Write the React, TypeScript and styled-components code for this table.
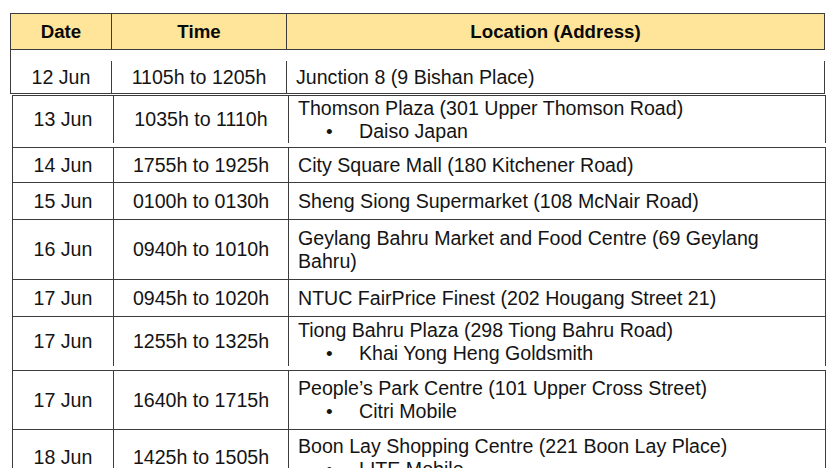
import React, { FC } from "react";
import styled, { createGlobalStyle } from "styled-components";

interface Visit {
    date: string;
    time: string;
    place: string;
    shops?: string[];
    height: number;
    lift?: number;
}

const firstVisit: Visit = { date: "12 Jun", time: "1105h to 1205h", place: "Junction 8 (9 Bishan Place)", height: 44 };

const visits: Visit[] = [
    { date: "13 Jun", time: "1035h to 1110h", place: "Thomson Plaza (301 Upper Thomson Road)", shops: ["Daiso Japan"], height: 52, lift: 4 },
    { date: "14 Jun", time: "1755h to 1925h", place: "City Square Mall (180 Kitchener Road)", height: 35 },
    { date: "15 Jun", time: "0100h to 0130h", place: "Sheng Siong Supermarket (108 McNair Road)", height: 37 },
    { date: "16 Jun", time: "0940h to 1010h", place: "Geylang Bahru Market and Food Centre (69 Geylang Bahru)", height: 60 },
    { date: "17 Jun", time: "0945h to 1020h", place: "NTUC FairPrice Finest (202 Hougang Street 21)", height: 37 },
    { date: "17 Jun", time: "1255h to 1325h", place: "Tiong Bahru Plaza (298 Tiong Bahru Road)", shops: ["Khai Yong Heng Goldsmith"], height: 54, lift: 4 },
    { date: "17 Jun", time: "1640h to 1715h", place: "People\u2019s Park Centre (101 Upper Cross Street)", shops: ["Citri Mobile"], height: 59 },
    { date: "18 Jun", time: "1425h to 1505h", place: "Boon Lay Shopping Centre (221 Boon Lay Place)", shops: ["LITE Mobile"], height: 58, lift: 2 },
];

const VisitRow: FC<{ visit: Visit; padTop?: number }> = ({ visit, padTop }) => (
    <Row $height={visit.height} $padTop={padTop || 0} $padBottom={visit.lift || 0}>
        <Cell $center>{visit.date}</Cell>
        <Cell $center>{visit.time}</Cell>
        <Cell>
            <div>{visit.place}</div>
            {visit.shops && visit.shops.map((s) => (
                <Shop key={s}>
                    <Bullet>{"\u2022"}</Bullet>
                    {s}
                </Shop>
            ))}
        </Cell>
    </Row>
);

const App: FC = () => {
    return (
        <Page>
            <GlobalStyle />
            <Table $width={815}>
                <HeadRow>
                    <HeadCell>Date</HeadCell>
                    <HeadCell>Time</HeadCell>
                    <HeadCell>Location (Address)</HeadCell>
                </HeadRow>
                <VisitRow visit={firstVisit} padTop={11} />
            </Table>
            <Table $width={814} $shift={2}>
                {visits.map((v, i) => (
                    <VisitRow key={i} visit={v} />
                ))}
            </Table>
        </Page>
    );
};

export default App;

const GlobalStyle = createGlobalStyle`
    html, body {
        margin: 0;
        padding: 0;
        background: #ffffff;
        overflow: hidden;
    }
    * {
        box-sizing: border-box;
    }
`;

const Page = styled.div`
    width: 830px;
    height: 468px;
    overflow: hidden;
    padding: 13px 0 0 10px;
    font-family: "Liberation Sans", Arial, sans-serif;
    font-size: 19.6px;
    line-height: 23px;
    color: #141414;
    display: flex;
    flex-direction: column;
    gap: 1px;
`;

const Table = styled.div<{ $width: number; $shift?: number }>`
    width: ${(p) => p.$width}px;
    margin-left: ${(p) => p.$shift || 0}px;
    border-top: 1px solid #3c3c3c;
    border-left: 1px solid #3c3c3c;
    display: flex;
    flex-direction: column;
    flex-shrink: 0;
`;

const HeadRow = styled.div`
    display: grid;
    grid-template-columns: 101px 175px 1fr;
    height: 36px;
    background: #ffe599;
    border-bottom: 1px solid #3c3c3c;
`;

const HeadCell = styled.div`
    display: flex;
    align-items: center;
    justify-content: center;
    font-size: 18.7px;
    font-weight: 700;
    color: #0a0a0a;
    border-right: 1px solid #3c3c3c;
`;

const Row = styled.div<{ $height: number; $padTop: number; $padBottom: number }>`
    display: grid;
    grid-template-columns: 101px 175px 1fr;
    height: ${(p) => p.$height}px;
    padding-top: ${(p) => p.$padTop}px;
    padding-bottom: ${(p) => p.$padBottom}px;
    border-bottom: 1px solid #3c3c3c;
    flex-shrink: 0;
`;

const Cell = styled.div<{ $center?: boolean }>`
    display: flex;
    flex-direction: column;
    justify-content: center;
    align-items: ${(p) => (p.$center ? "center" : "flex-start")};
    padding: 0 ${(p) => (p.$center ? "0" : "9px")};
    border-right: 1px solid #3c3c3c;
`;

const Shop = styled.div`
    display: flex;
    align-items: baseline;
`;

const Bullet = styled.span`
    width: 61px;
    padding-left: 28px;
    font-size: 19px;
`;
